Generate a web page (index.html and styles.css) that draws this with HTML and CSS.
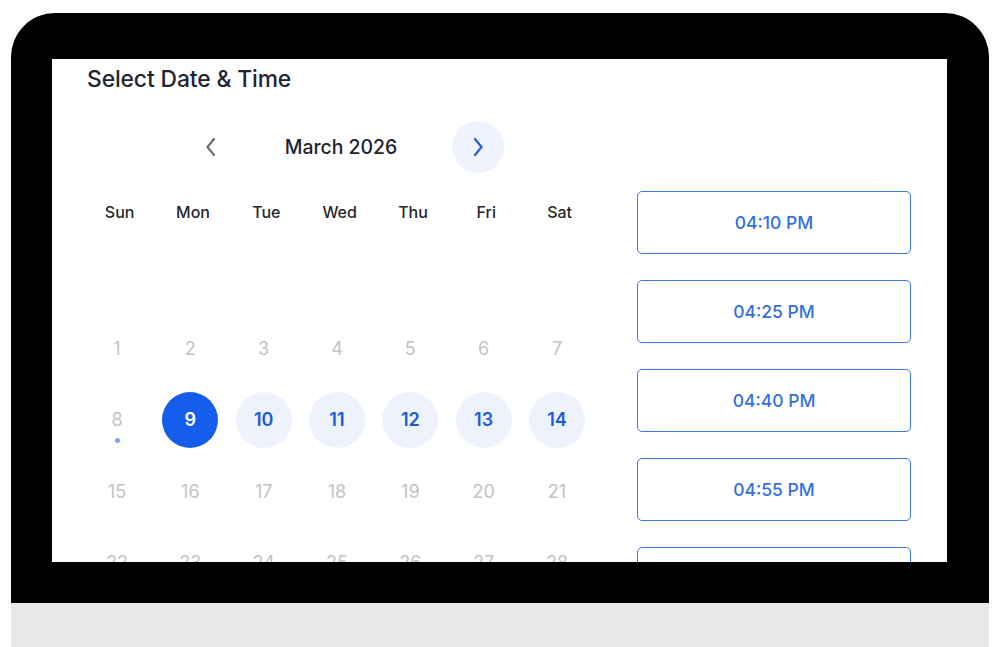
FILE: index.html
```html
<!DOCTYPE html>
<html lang="en">
<head>
<meta charset="utf-8">
<title>Select Date &amp; Time</title>
<link rel="stylesheet" href="styles.css">
</head>
<body>
<div class="laptop">
  <div class="frame">
    <div class="screen">
      <h1 class="title">Select Date &amp; Time</h1>
      <div class="booking">
        <div class="calendar">
          <div class="month-nav">
            <button class="nav-btn prev" aria-label="Previous month">
              <svg width="24" height="24" viewBox="0 0 24 24"><path d="M15 4 L8.5 12 L15 20" fill="none" stroke="currentColor" stroke-width="2.2" stroke-linecap="round" stroke-linejoin="round"/></svg>
            </button>
            <span class="month-label">March 2026</span>
            <button class="nav-btn next" aria-label="Next month">
              <svg width="24" height="24" viewBox="0 0 24 24"><path d="M9 4 L15.5 12 L9 20" fill="none" stroke="currentColor" stroke-width="2.2" stroke-linecap="round" stroke-linejoin="round"/></svg>
            </button>
          </div>
          <div class="weekdays">
            <span>Sun</span><span>Mon</span><span>Tue</span><span>Wed</span><span>Thu</span><span>Fri</span><span>Sat</span>
          </div>
          <div class="days">
            <div class="week-blank"></div>
            <span class="day off">1</span><span class="day off">2</span><span class="day off">3</span><span class="day off">4</span><span class="day off">5</span><span class="day off">6</span><span class="day off">7</span>
            <span class="day off today">8<i class="dot"></i></span>
            <span class="day selected">9</span>
            <span class="day open">10</span><span class="day open">11</span><span class="day open">12</span><span class="day open">13</span><span class="day open">14</span>
            <span class="day off">15</span><span class="day off">16</span><span class="day off">17</span><span class="day off">18</span><span class="day off">19</span><span class="day off">20</span><span class="day off">21</span>
            <span class="day off">22</span><span class="day off">23</span><span class="day off">24</span><span class="day off">25</span><span class="day off">26</span><span class="day off">27</span><span class="day off">28</span>
          </div>
        </div>
        <div class="slots">
          <button class="slot">04:10 PM</button>
          <button class="slot">04:25 PM</button>
          <button class="slot">04:40 PM</button>
          <button class="slot">04:55 PM</button>
          <button class="slot">05:10 PM</button>
        </div>
      </div>
    </div>
  </div>
  <div class="base"></div>
</div>
</body>
</html>
```
FILE: styles.css
```css
* { box-sizing: border-box; }
html, body { margin: 0; padding: 0; background: #ffffff; }
body {
  font-family: Inter, "Noto Sans", "Liberation Sans", sans-serif;
  width: 1000px;
  height: 647px;
  overflow: hidden;
}
.laptop {
  margin: 13px 0 0 11px;
  width: 978px;
}
.frame {
  background: #000000;
  border-radius: 44px 44px 0 0;
  padding: 46px 42px 41px 41px;
}
.base {
  height: 44px;
  background: #e8e8e8;
}
.screen {
  background: #ffffff;
  height: 503px;
  overflow: hidden;
  padding: 6px 36px 0 31px;
}
.title {
  margin: 0 0 0 4px;
  font-size: 22.8px;
  line-height: 28px;
  font-weight: 500;
  color: #1d2433;
  letter-spacing: -0.1px;
}
.booking {
  display: flex;
  gap: 40px;
  margin-top: 28px;
}
.calendar {
  width: 514px;
}
.month-nav {
  display: flex;
  align-items: center;
  padding-left: 102px;
  height: 52px;
}
.nav-btn {
  width: 52px;
  height: 52px;
  border: none;
  border-radius: 50%;
  background: transparent;
  display: flex;
  align-items: center;
  justify-content: center;
  padding: 0;
  color: #6b6f76;
}
.nav-btn.next {
  background: #eef3fd;
  color: #1f5fe0;
}
.month-label {
  width: 215px;
  text-align: center;
  padding-right: 7px;
  font-size: 19.4px;
  font-weight: 500;
  color: #1e2330;
}
.weekdays {
  display: grid;
  grid-template-columns: repeat(7, 73.33px);
  margin-top: 27px;
  height: 24px;
  line-height: 24px;
  font-size: 16px;
  font-weight: 500;
  color: #25272c;
  text-align: center;
}
.days {
  display: grid;
  grid-template-columns: repeat(7, 56px);
  grid-auto-rows: 56px;
  column-gap: 17.33px;
  row-gap: 15.5px;
  padding-left: 6px;
  margin-top: 24.5px;
}
.week-blank { grid-column: 1 / -1; }
.day {
  position: relative;
  width: 56px;
  height: 56px;
  border-radius: 50%;
  display: flex;
  align-items: center;
  justify-content: center;
  font-size: 18px;
}
.day.off {
  color: #c3c3c3;
  font-weight: 400;
}
.day.open {
  background: #eef2fd;
  color: #1d5bd6;
  font-weight: 600;
}
.day.selected {
  background: #155eeb;
  color: #ffffff;
  font-weight: 600;
}
.dot {
  position: absolute;
  left: 25.5px;
  top: 46px;
  width: 5px;
  height: 5px;
  border-radius: 50%;
  background: #7ea5ef;
}
.slots {
  display: flex;
  flex-direction: column;
  gap: 26px;
  margin-top: 70px;
  width: 274px;
}
.slot {
  flex: none;
  height: 63px;
  width: 274px;
  border: 1.5px solid #3b78e6;
  border-radius: 5px;
  background: #ffffff;
  color: #3470dc;
  font-family: Inter, "Noto Sans", "Liberation Sans", sans-serif;
  font-size: 17.5px;
  font-weight: 500;
}
```
